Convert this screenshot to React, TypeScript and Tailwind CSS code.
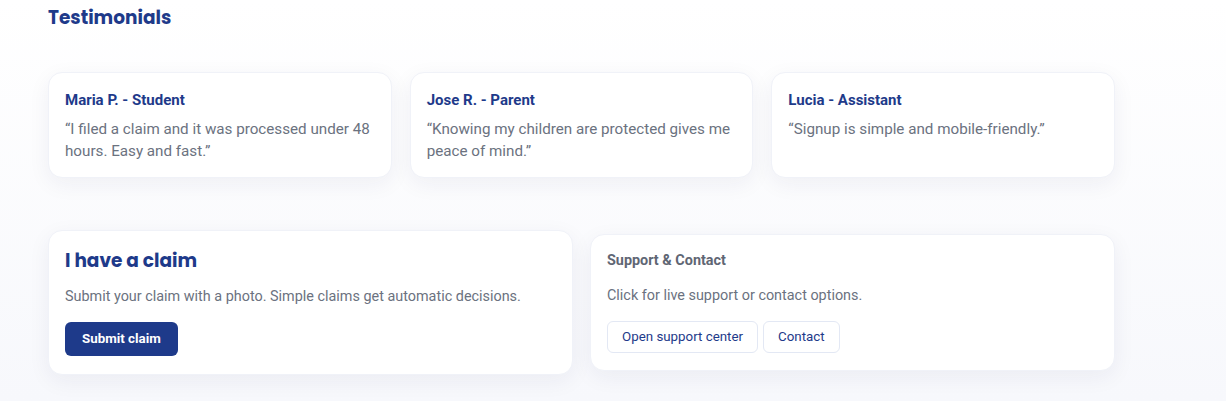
import React from 'react';

// ==================== Data ====================
interface Testimonial {
  name: string;
  quote: string;
}

const testimonials: Testimonial[] = [
  { name: 'Maria P. - Student', quote: '“I filed a claim and it was processed under 48 hours. Easy and fast.”' },
  { name: 'Jose R. - Parent', quote: '“Knowing my children are protected gives me peace of mind.”' },
  { name: 'Lucia - Assistant', quote: '“Signup is simple and mobile-friendly.”' },
];

const heading = { fontFamily: '"Poppins", "Inter", sans-serif' };

// ==================== Card ====================
const Card: React.FC<{ className?: string; children: React.ReactNode }> = ({ className = '', children }) => (
  <div
    className={`bg-white rounded-[14px] border border-[#f0f2f8] shadow-[0_6px_22px_rgba(30,41,80,0.06)] ${className}`}
  >
    {children}
  </div>
);

export default function App() {
  return (
    <div
      className="min-h-screen bg-gradient-to-b from-white to-[#f7f8fc] text-[#6b7280]"
      style={{ fontFamily: 'Roboto, "Liberation Sans", sans-serif' }}
    >
      <div className="w-[1067px] ml-12 pb-6">
        <h2 className="text-[18.5px] leading-[35px] font-bold text-[#1e3a8a]" style={heading}>
          Testimonials
        </h2>

        {/* Testimonials */}
        <div className="grid grid-cols-3 gap-[18px] mt-[37px]">
          {testimonials.map((t) => (
            <Card key={t.name} className="px-4 pt-[17px] pb-[15px]">
              <h3 className="text-[15px] leading-5 font-bold text-[#1e3a8a]">{t.name}</h3>
              <p className="mt-2 text-[15.2px] leading-[22px] text-[#6b7280]">{t.quote}</p>
            </Card>
          ))}
        </div>

        {/* Actions */}
        <div className="grid grid-cols-2 gap-[17px] mt-[52px] items-center">
          <Card className="px-4 pt-4 pb-[18px]">
            <h3 className="text-[18.5px] leading-7 font-bold text-[#1e3a8a]" style={heading}>
              I have a claim
            </h3>
            <p className="mt-3 text-[14.4px] leading-5">
              Submit your claim with a photo. Simple claims get automatic decisions.
            </p>
            <button className="mt-[15px] h-[34px] px-[17px] rounded-md bg-[#1e3a8a] text-white text-[13.33px] font-bold">
              Submit claim
            </button>
          </Card>

          <Card className="px-4 pt-4 pb-[17px]">
            <h3 className="text-[14.4px] leading-5 font-bold text-[#5f6674]">Support &amp; Contact</h3>
            <p className="mt-[15px] text-[14.4px] leading-5">Click for live support or contact options.</p>
            <div className="mt-[15px] flex gap-[5px]">
              <button className="h-8 px-[14px] rounded-md border border-[#e3e8f4] bg-white text-[13.33px] text-[#1e3a8a]">
                Open support center
              </button>
              <button className="h-8 px-[14px] rounded-md border border-[#e3e8f4] bg-white text-[13.33px] text-[#1e3a8a]">
                Contact
              </button>
            </div>
          </Card>
        </div>
      </div>
    </div>
  );
}
